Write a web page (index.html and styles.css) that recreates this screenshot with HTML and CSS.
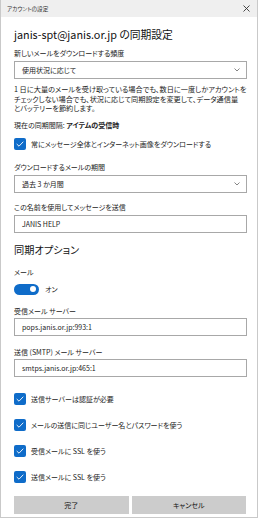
FILE: index.html
```html
<!DOCTYPE html>
<html lang="ja">
<head>
    <meta charset="UTF-8">
    <meta name="viewport" content="width=device-width, initial-scale=1.0">
    <title>アカウントの設定</title>
    <link rel="stylesheet" href="styles.css">
</head>
<body>
    <div class="window">
        <div class="titlebar">
            <span class="title">アカウントの設定</span>
            <svg class="close" width="7" height="7" viewBox="0 0 7 7">
                <path d="M0.5 0.5 L6.5 6.5 M6.5 0.5 L0.5 6.5" stroke="#333" stroke-width="0.9" fill="none"/>
            </svg>
        </div>

        <div class="content">
            <h1 class="heading">janis-spt@janis.or.jp の同期設定</h1>

            <div class="label first-label">新しいメールをダウンロードする頻度</div>
            <div class="select">
                <span>使用状況に応じて</span>
                <svg class="chevron" width="6" height="4" viewBox="0 0 6 4">
                    <polyline points="0.5,0.5 3,3 5.5,0.5" stroke="#666" stroke-width="0.8" fill="none"/>
                </svg>
            </div>

            <p class="note">1 日に大量のメールを受け取っている場合でも、数日に一度しかアカウントを<br>チェックしない場合でも、状況に応じて同期設定を変更して、データ通信量<br>とバッテリーを節約します。</p>

            <div class="status">現在の同期間隔: <b>アイテムの受信時</b></div>

            <label class="check first-check">
                <span class="box"><svg width="8" height="6" viewBox="0 0 8 6"><polyline points="0.7,3 3,5.2 7.3,0.7" stroke="#fff" stroke-width="0.9" fill="none"/></svg></span>
                常にメッセージ全体とインターネット画像をダウンロードする
            </label>

            <div class="label period-label">ダウンロードするメールの期間</div>
            <div class="select">
                <span>過去 3 か月間</span>
                <svg class="chevron" width="6" height="4" viewBox="0 0 6 4">
                    <polyline points="0.5,0.5 3,3 5.5,0.5" stroke="#666" stroke-width="0.8" fill="none"/>
                </svg>
            </div>

            <div class="label">この名前を使用してメッセージを送信</div>
            <div class="input">JANIS HELP</div>

            <h2 class="subheading">同期オプション</h2>

            <div class="label mail-label">メール</div>
            <div class="toggle-row">
                <span class="toggle"><span class="knob"></span></span>
                <span>オン</span>
            </div>

            <div class="label server-label">受信メール サーバー</div>
            <div class="input tight">pops.janis.or.jp:993:1</div>

            <div class="label server-label">送信 (SMTP) メール サーバー</div>
            <div class="input tight">smtps.janis.or.jp:465:1</div>

            <div class="checklist">
                <label class="check">
                    <span class="box"><svg width="8" height="6" viewBox="0 0 8 6"><polyline points="0.7,3 3,5.2 7.3,0.7" stroke="#fff" stroke-width="0.9" fill="none"/></svg></span>
                    送信サーバーは認証が必要
                </label>
                <label class="check">
                    <span class="box"><svg width="8" height="6" viewBox="0 0 8 6"><polyline points="0.7,3 3,5.2 7.3,0.7" stroke="#fff" stroke-width="0.9" fill="none"/></svg></span>
                    メールの送信に同じユーザー名とパスワードを使う
                </label>
                <label class="check">
                    <span class="box"><svg width="8" height="6" viewBox="0 0 8 6"><polyline points="0.7,3 3,5.2 7.3,0.7" stroke="#fff" stroke-width="0.9" fill="none"/></svg></span>
                    受信メールに SSL を使う
                </label>
                <label class="check">
                    <span class="box"><svg width="8" height="6" viewBox="0 0 8 6"><polyline points="0.7,3 3,5.2 7.3,0.7" stroke="#fff" stroke-width="0.9" fill="none"/></svg></span>
                    送信メールに SSL を使う
                </label>
            </div>

            <div class="buttons">
                <button class="btn">完了</button>
                <button class="btn">キャンセル</button>
            </div>
        </div>
    </div>
</body>
</html>
```

FILE: styles.css
```css
* {
    box-sizing: border-box;
}
body {
    margin: 0;
    background: #fff;
    font-family: "Noto Sans CJK JP", sans-serif;
    font-feature-settings: "palt";
    font-size: 7px;
    color: #1b1b1b;
}
.window {
    width: 258px;
    height: 518px;
    border: 1px solid #c9c9c9;
    border-top: none;
    background: #fff;
}
.titlebar {
    height: 17px;
    background: #efefef;
    display: flex;
    align-items: center;
    justify-content: space-between;
    padding: 0 7px 0 6px;
}
.title {
    font-size: 5.6px;
    color: #333;
}
.content {
    padding: 0 10px 0 13px;
    display: flex;
    flex-direction: column;
}
.heading {
    margin: 9px 0 0;
    font-size: 10.8px;
    font-weight: normal;
    line-height: 16px;
    color: #111;
}
.label {
    line-height: 10px;
    margin-top: 9px;
    color: #222;
}
.first-label {
    margin-top: 6px;
}
.select, .input {
    height: 18px;
    margin-top: 3px;
    border: 1px solid #a8a8a8;
    padding: 0 6px 0 7px;
    display: flex;
    align-items: center;
    justify-content: space-between;
    line-height: 10px;
    color: #222;
}
.input.tight {
    margin-top: 2px;
}
.note {
    margin: 6px 0 0;
    font-size: 7.2px;
    line-height: 9.7px;
    white-space: nowrap;
}
.status {
    margin-top: 6px;
    line-height: 10px;
}
.status b {
    font-weight: bold;
}
.check {
    display: flex;
    align-items: center;
    gap: 5px;
    height: 12px;
    line-height: 10px;
}
.first-check {
    margin-top: 8px;
}
.box {
    width: 12px;
    height: 12px;
    border-radius: 2px;
    background: #0f6cc9;
    display: flex;
    align-items: center;
    justify-content: center;
    flex-shrink: 0;
}
.period-label {
    margin-top: 12px;
}
.subheading {
    margin: 10px 0 0;
    font-size: 10.2px;
    font-weight: normal;
    line-height: 14px;
    color: #111;
}
.mail-label {
    margin-top: 10px;
}
.toggle-row {
    margin-top: 6px;
    height: 12px;
    display: flex;
    align-items: center;
    gap: 6px;
}
.toggle {
    width: 25px;
    height: 11px;
    border-radius: 6px;
    background: #0f6cc9;
    display: flex;
    align-items: center;
    justify-content: flex-end;
    padding-right: 3px;
}
.knob {
    width: 6px;
    height: 6px;
    border-radius: 50%;
    background: #fff;
}
.server-label {
    margin-top: 11px;
}
.checklist {
    margin-top: 16px;
    display: flex;
    flex-direction: column;
    gap: 14px;
}
.buttons {
    margin-top: 13px;
    display: grid;
    grid-template-columns: 1fr 1fr;
    gap: 3px;
    padding-right: 1px;
}
.btn {
    height: 18px;
    border: none;
    background: #cccccc;
    font-family: inherit;
    font-feature-settings: "palt";
    font-size: 7px;
    color: #111;
    padding: 0;
}
```
